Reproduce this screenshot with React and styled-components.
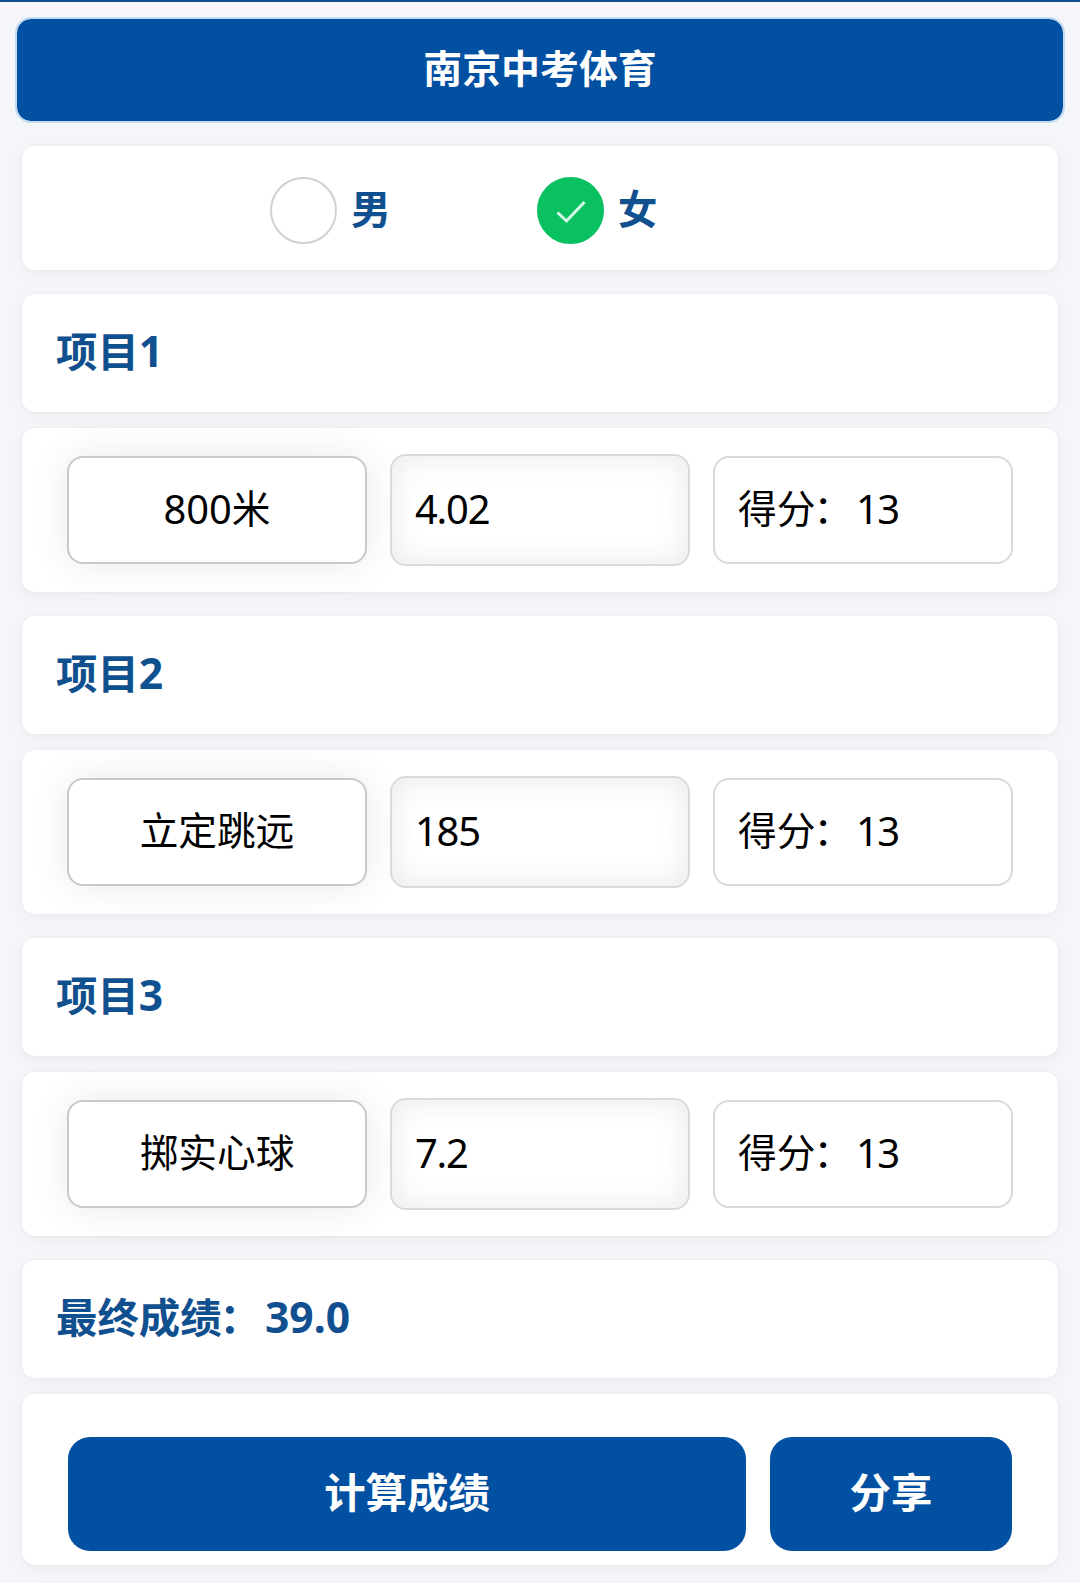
import React, { useState } from 'react';
import styled, { createGlobalStyle, css } from 'styled-components';


const items = [
  { title: '项目', no: '1', event: [{ num: '800' }, '米'], value: '4.02', score: '13' },
  { title: '项目', no: '2', event: ['立定跳远'], value: '185', score: '13' },
  { title: '项目', no: '3', event: ['掷实心球'], value: '7.2', score: '13' },
];

export default () => {
  const [gender, setGender] = useState('女');

  return (
    <Page lang="zh-CN">
      <GlobalStyle/>
      <Header>南京中考体育</Header>

      <GenderCard>
        {['男', '女'].map(name => (
          <Option key={name} onClick={() => setGender(name)}>
            <Radio $checked={gender === name}>
              {gender === name && (
                <svg width="32" height="26" viewBox="0 0 32 26" fill="none">
                  <path d="M2.5 13.5 L11.5 22 L29.5 3" stroke="#d5fae6" strokeWidth="3"/>
                </svg>
              )}
            </Radio>
            <OptionName>{name}</OptionName>
          </Option>
        ))}
      </GenderCard>

      {items.map(item => (
        <React.Fragment key={item.no}>
          <TitleCard>
            {item.title}<Num>{item.no}</Num>
          </TitleCard>
          <RowCard>
            <Picker>
              {item.event.map(part => part.num ? <Num key={part.num}>{part.num}</Num> : part)}
            </Picker>
            <Input defaultValue={item.value}/>
            <Score>得分<Colon>：</Colon><Num $tight>{item.score}</Num></Score>
          </RowCard>
        </React.Fragment>
      ))}

      <TitleCard>最终成绩<Colon>：</Colon><Num $after>39.0</Num></TitleCard>

      <ActionCard>
        <Button $width="678px">计算成绩</Button>
        <Button $width="242px">分享</Button>
      </ActionCard>
    </Page>
  );
};


const GlobalStyle = createGlobalStyle`
  * {
    box-sizing: border-box;
  }
  body {
    margin: 0;
    background: #f4f6fa;
    font-family: 'Noto Sans CJK SC', 'Noto Sans', sans-serif;
  }
`
const Page = styled.main`
  display: flex;
  flex-direction: column;
  height: 1583px;
  padding: 15px 22px 0;
  border-top: 2px solid #11508f;
  background: #f4f6fa;
  font-size: 38.7px;
  line-height: 1;
  color: #000;
`
const Header = styled.header`
  display: flex;
  justify-content: center;
  align-items: center;
  flex: none;
  height: 106px;
  margin: 0 -7px;
  padding-bottom: 7px;
  border: 2px solid #c3dbf0;
  border-radius: 16px;
  background: #0250a1;
  background-clip: padding-box;
  color: #fff;
  font-size: 38.9px;
  font-weight: 700;
`
const Card = styled.section`
  display: flex;
  align-items: center;
  flex: none;
  border-radius: 13px;
  background: #fff;
  box-shadow: 0 4px 16px rgba(0, 0, 0, 0.04), 0 0 3px rgba(0, 0, 0, 0.06);
`
const GenderCard = styled(Card)`
  height: 124px;
  margin-top: 23px;
  padding: 8px 0 3px 248px;
  gap: 146px;
`
const Option = styled.div`
  display: flex;
  align-items: center;
  gap: 14px;
  color: #11508f;
  font-size: 39.7px;
  font-weight: 700;
`
const OptionName = styled.span`
  padding-bottom: 7px;
`
const Radio = styled.span`
  display: flex;
  justify-content: center;
  align-items: center;
  width: 67px;
  height: 67px;
  padding: 2px 0 0 2px;
  border: 2px solid #d1d1d1;
  border-radius: 50%;
  ${p => p.$checked && css`
    border-color: #09c160;
    background: #09c160;
  `}
`
const Num = styled.span`
  font-family: 'Noto Sans', sans-serif;
  font-size: 1.03em;
  ${p => p.$tight && css`
    margin-left: 2px;
    letter-spacing: -1.5px;
  `}
  ${p => p.$after && css`
    margin-left: 2px;
  `}
`
const Colon = styled.span`
  transform: translateX(-2px);
`
const TitleCard = styled(Card)`
  height: 118px;
  margin-top: 24px;
  padding: 0 34px 6px;
  color: #11508f;
  font-size: 41.4px;
  font-weight: 700;
`
const RowCard = styled(Card)`
  height: 164px;
  margin-top: 16px;
  padding: 0 45px;
  gap: 23px;
`
const box = css`
  display: flex;
  align-items: center;
  width: 300px;
  height: 108px;
  padding: 0 23px 8px;
  border: 2px solid #dadada;
  border-radius: 16px;
  background: #fff;

  ${Num} {
    padding-top: 6px;
  }
`
const Picker = styled.div`
  ${box}
  justify-content: center;
  border-color: #c9c9c9;
  box-shadow: 0 0 38px rgba(0, 0, 0, 0.09);
`
const Input = styled.input`
  ${box}
  height: 112px;
  padding-bottom: 4px;
  outline: none;
  color: #000;
  font-family: 'Noto Sans', sans-serif;
  font-size: 39.9px;
  letter-spacing: -1.2px;
  box-shadow: inset 0 0 32px rgba(0, 0, 0, 0.09);
`
const Score = styled.div`
  ${box}
`
const ActionCard = styled(Card)`
  align-items: flex-start;
  height: 171px;
  margin-top: 16px;
  padding: 43px 46px 0;
  gap: 24px;
`
const Button = styled.button`
  width: ${p => p.$width};
  height: 114px;
  padding: 0 0 8px;
  border: 0;
  border-radius: 22px;
  background: #0250a1;
  color: #fff;
  font-family: inherit;
  font-size: 41.4px;
  font-weight: 700;
`
